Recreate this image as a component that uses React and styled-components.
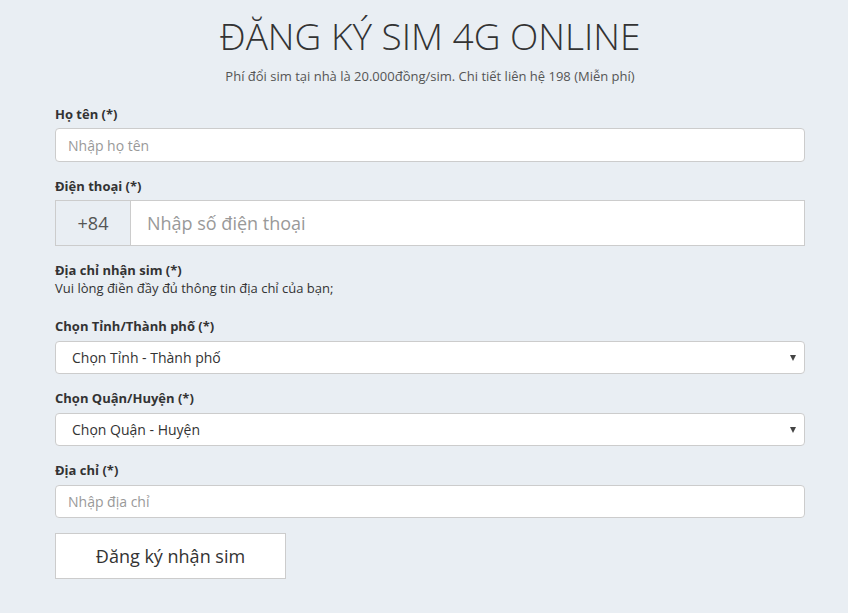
import React from "react";
import styled, { createGlobalStyle } from "styled-components";

const GlobalStyle = createGlobalStyle`
  body {
    margin: 0;
    background: #e9eef3;
    font-family: "Open Sans", "Liberation Sans", sans-serif;
    color: #333;
  }
`;

const Container = styled.div`
  width: 750px;
  margin-left: 55px;
  padding-top: 12px;
`;

const Title = styled.h1`
  margin: 0;
  text-align: center;
  font-size: 37px;
  font-weight: 300;
  line-height: 48px;
  color: #333;
`;

const Subtitle = styled.p`
  margin: 7px 0 20px;
  text-align: center;
  font-size: 13px;
  line-height: 18px;
  color: #555;
`;

const Group = styled.div`
  display: flex;
  flex-direction: column;
  margin-bottom: 15px;
`;

const Label = styled.label`
  display: block;
  font-size: 13px;
  font-weight: 700;
  line-height: 18px;
  margin-bottom: ${(p) => (p.$tight ? "0" : "5px")};
`;

const Help = styled.div`
  font-size: 13px;
  line-height: 18px;
  margin-bottom: 20px;
`;

const Input = styled.input`
  display: block;
  box-sizing: border-box;
  width: 100%;
  height: ${(p) => (p.$short ? "33px" : "34px")};
  margin: ${(p) => (p.$short ? "1px 0 0" : "0")};
  padding: 0 12px;
  border: 1px solid #ccc;
  border-radius: 4px;
  background: #fff;
  font-family: inherit;
  font-size: 14px;
  color: #555;
  outline: none;
  &::placeholder {
    color: #999;
  }
`;

const InputGroup = styled.div`
  display: flex;
  height: 46px;
  box-sizing: border-box;
  border: 1px solid #ccc;
  background: #fff;
`;

const Addon = styled.span`
  width: 74px;
  display: flex;
  align-items: center;
  justify-content: center;
  background: #e9eef3;
  border-right: 1px solid #ccc;
  font-size: 18px;
  color: #555;
`;

const BigInput = styled.input`
  flex: 1;
  border: none;
  padding: 0 16px;
  font-family: inherit;
  font-size: 18px;
  color: #555;
  background: #fff;
  outline: none;
  &::placeholder {
    color: #999;
  }
`;

const SelectBox = styled.div`
  height: 33px;
  margin-top: 1px;
  box-sizing: border-box;
  border: 1px solid #ccc;
  border-radius: 4px;
  background: #fff;
  display: flex;
  align-items: center;
  padding: 0 16px;
  font-size: 14px;
  color: #333;
`;

const Arrow = styled.span`
  margin-left: auto;
  margin-right: -8px;
  width: 0;
  height: 0;
  border-left: 3.5px solid transparent;
  border-right: 3.5px solid transparent;
  border-top: 6px solid #444;
`;

const Button = styled.button`
  width: 231px;
  height: 46px;
  border: 1px solid #ccc;
  background: #fff;
  font-family: inherit;
  font-size: 18px;
  color: #333;
  cursor: pointer;
`;

const Select = ({ children }) => (
  <SelectBox>
    {children}
    <Arrow />
  </SelectBox>
);

export default function App() {
  return (
    <>
      <GlobalStyle />
      <Container>
        <Title>ĐĂNG KÝ SIM 4G ONLINE</Title>
        <Subtitle>
          Phí đổi sim tại nhà là 20.000đồng/sim. Chi tiết liên hệ 198 (Miễn phí)
        </Subtitle>
        <Group>
          <Label>Họ tên (*)</Label>
          <Input placeholder="Nhập họ tên" />
        </Group>
        <Group>
          <Label>Điện thoại (*)</Label>
          <InputGroup>
            <Addon>+84</Addon>
            <BigInput placeholder="Nhập số điện thoại" />
          </InputGroup>
        </Group>
        <Label $tight>Địa chỉ nhận sim (*)</Label>
        <Help>Vui lòng điền đầy đủ thông tin địa chỉ của bạn;</Help>
        <Group>
          <Label>Chọn Tỉnh/Thành phố (*)</Label>
          <Select>Chọn Tỉnh - Thành phố</Select>
        </Group>
        <Group>
          <Label>Chọn Quận/Huyện (*)</Label>
          <Select>Chọn Quận - Huyện</Select>
        </Group>
        <Group>
          <Label>Địa chỉ (*)</Label>
          <Input $short placeholder="Nhập địa chỉ" />
        </Group>
        <Button>Đăng ký nhận sim</Button>
      </Container>
    </>
  );
}
